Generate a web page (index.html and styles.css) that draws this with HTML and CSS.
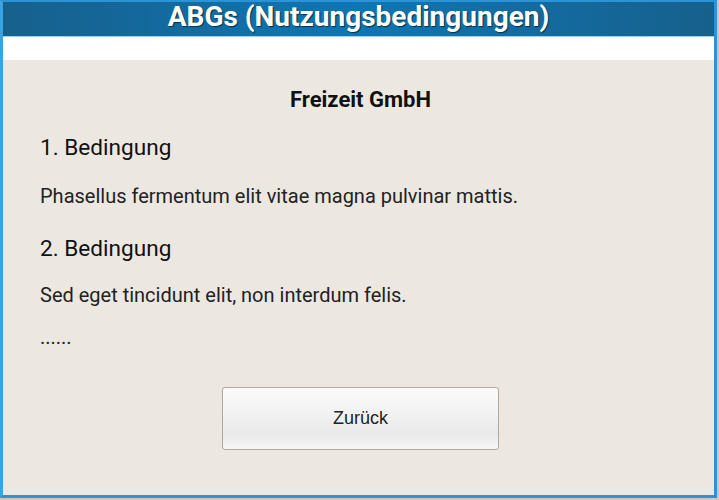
FILE: index.html
```html
<!DOCTYPE html>
<html>
<head>
<meta charset="utf-8">
<link rel="stylesheet" href="styles.css">
</head>
<body>
<div class="window">
  <header class="titlebar">ABGs (Nutzungsbedingungen)</header>
  <div class="strip"></div>
  <main class="content">
    <h2 class="company">Freizeit GmbH</h2>
    <h3 class="section s1">1. Bedingung</h3>
    <p class="text t1">Phasellus fermentum elit vitae magna pulvinar mattis.</p>
    <h3 class="section s2">2. Bedingung</h3>
    <p class="text t2">Sed eget tincidunt elit, non interdum felis.</p>
    <p class="text t3">......</p>
    <div class="actions">
      <button class="btn">Zurück</button>
    </div>
  </main>
</div>
</body>
</html>
```

FILE: styles.css
```css
html, body {
  margin: 0;
  padding: 0;
  background: #c8c8c8;
}
body {
  width: 719px;
  height: 500px;
  font-family: Roboto, "Liberation Sans", sans-serif;
}
.window {
  box-sizing: border-box;
  width: 717px;
  height: 498px;
  border: 3px solid #2b93d6;
  border-top-width: 2px;
  border-left-color: #3aa3e2;
  background: #ece8e1;
  display: flex;
  flex-direction: column;
}
.titlebar {
  box-sizing: border-box;
  height: 34px;
  padding-bottom: 5px;
  background: linear-gradient(to right, #17608c 0%, #0f76b4 50%, #17608c 100%);
  color: #fff;
  font-weight: 700;
  font-size: 28px;
  line-height: 29px;
  text-align: center;
  text-shadow: 1px 1px 1px #0b2f47;
}
.strip {
  height: 23px;
  background: #fff;
  border-top: 1px solid #9bd0ef;
}
.content {
  flex: 1;
  padding: 0 33px 0 37px;
  color: #222;
}
.company {
  margin: 27px 0 0;
  text-align: center;
  font-size: 22px;
  font-weight: 700;
  color: #111;
  line-height: 26px;
}
.section {
  margin: 0;
  font-size: 22.6px;
  font-weight: 400;
  color: #111;
  line-height: 28px;
}
.text {
  margin: 0;
  font-size: 20px;
  line-height: 24px;
  color: #222;
}
.s1 { margin-top: 21px; }
.t1 { margin-top: 22px; }
.s2 { margin-top: 27px; }
.t2 { margin-top: 20px; }
.t3 { margin-top: 18px; }
.actions {
  display: flex;
  justify-content: center;
  margin-top: 38px;
}
.btn {
  width: 277px;
  height: 63px;
  border: 1px solid #b3a999;
  border-radius: 3px;
  background: linear-gradient(to bottom, #fbfbfb 0%, #f0f0f0 50%, #e9e9e9 75%, #f6f6f6 100%);
  font-family: "Liberation Sans", Arial, sans-serif;
  font-size: 18px;
  color: #222;
  padding: 0;
}
```
